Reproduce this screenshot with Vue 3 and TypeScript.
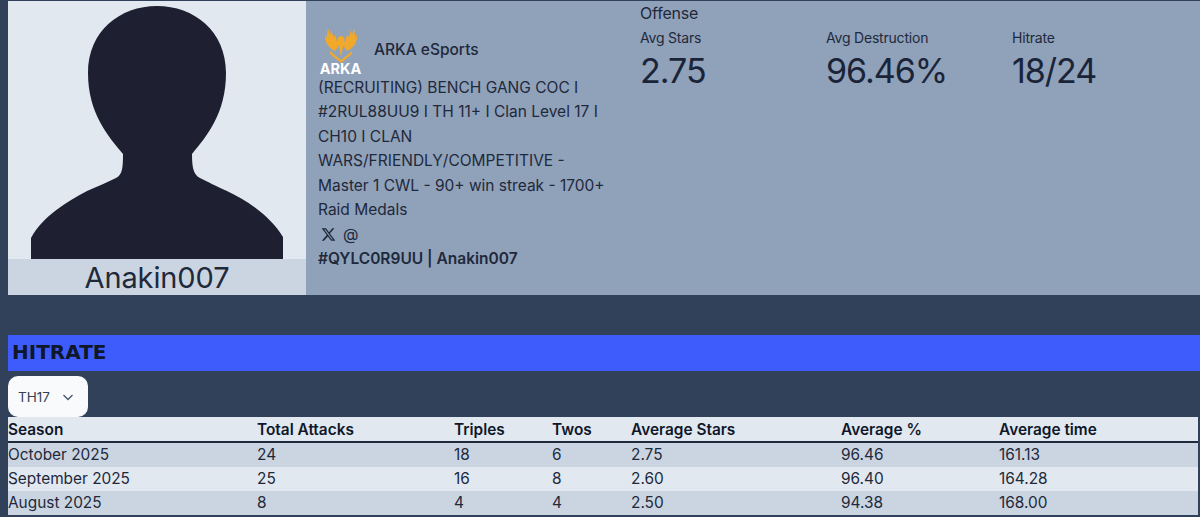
<script setup lang="ts">
interface Stat { label: string; value: string }
interface Row { season: string; total: number; triples: number; twos: number; stars: string; pct: string; time: string }
const stats: Stat[] = [
  { label: 'Avg Stars', value: '2.75' },
  { label: 'Avg Destruction', value: '96.46%' },
  { label: 'Hitrate', value: '18/24' },
]
const heads = ['Season', 'Total Attacks', 'Triples', 'Twos', 'Average Stars', 'Average %', 'Average time']
const rows: Row[] = [
  { season: 'October 2025', total: 24, triples: 18, twos: 6, stars: '2.75', pct: '96.46', time: '161.13' },
  { season: 'September 2025', total: 25, triples: 16, twos: 8, stars: '2.60', pct: '96.40', time: '164.28' },
  { season: 'August 2025', total: 8, triples: 4, twos: 4, stars: '2.50', pct: '94.38', time: '168.00' },
]
</script>

<template>
  <div class="page">
    <section class="profile">
      <div class="avatar">
        <div class="portrait">
          <svg width="298" height="258" viewBox="0 0 298 258">
            <path fill="#1e2032" d="M23 258 V237 C35 215 60 200 79 190 C90 185 100 181 108 177 C114 174 115 168 115 153 C100 135 80 112 80 72 C80 30 112 5 149 5 C186 5 218 30 218 72 C218 112 199 135 184 153 C184 168 186 174 192 177 C200 181 208 185 219 190 C240 200 262 215 275 236 V258 Z"/>
          </svg>
        </div>
        <div class="name">Anakin007</div>
      </div>
      <div class="info">
        <div class="clan">
          <div class="logo">
            <svg width="40" height="36" viewBox="0 0 40 36">
              <path fill="#f0a92a" d="M7 1 L9 8 L10 3 L12.500 10 L14 8 L16 14 L17 20 L14 24 C9 22 3 16 4 7 L5.500 11 Z"/>
              <path fill="#f0a92a" d="M33 1 L31 8 L30 3 L27.500 10 L26 8 L24 14 L23 20 L26 24 C31 22 37 16 36 7 L34.500 11 Z"/>
              <path fill="#f0a92a" d="M20 9 C23 9 24 12 23 14 L25 16 L22 20 L20 30 L18 20 L15 16 L17 14 C16 12 17 9 20 9 Z"/>
              <path fill="#f0a92a" d="M9 24 L20 33 L31 24 L31 27 L20 36 L9 27 Z"/>
            </svg>
            <span class="logo-text">ARKA</span>
          </div>
          <span class="clan-name">ARKA eSports</span>
        </div>
        <p class="bio">(RECRUITING) BENCH GANG COC I #2RUL88UU9 I TH 11+ I Clan Level 17 I CH10 I CLAN WARS/FRIENDLY/COMPETITIVE - Master 1 CWL - 90+ win streak - 1700+ Raid Medals</p>
        <div class="social">
          <svg width="15" height="15" viewBox="0 0 24 24">
            <path fill="#1e293b" d="M18.200 2h3.400l-7.400 8.500L23 22h-6.800l-5.300-7-6.100 7H1.300l7.900-9.100L1 2h7l4.800 6.400zm-1.200 18h1.900L7 3.900H5z"/>
          </svg>
          <span>@</span>
        </div>
        <div class="tag">#QYLC0R9UU | Anakin007</div>
      </div>
      <div class="offense">
        <div class="offense-title">Offense</div>
        <div class="stats">
          <div v-for="s in stats" :key="s.label">
            <div class="stat-label">{{ s.label }}</div>
            <div class="stat-value">{{ s.value }}</div>
          </div>
        </div>
      </div>
    </section>

    <h2 class="banner">HITRATE</h2>

    <div class="select">
      <span>TH17</span>
      <svg width="12" height="12" viewBox="0 0 12 12">
        <path d="M1.500 4 L6 8.500 L10.500 4" fill="none" stroke="#475569" stroke-width="1.300"/>
      </svg>
    </div>

    <table class="table">
      <thead>
        <tr><th v-for="h in heads" :key="h">{{ h }}</th></tr>
      </thead>
      <tbody>
        <tr v-for="r in rows" :key="r.season">
          <td>{{ r.season }}</td>
          <td>{{ r.total }}</td>
          <td>{{ r.triples }}</td>
          <td>{{ r.twos }}</td>
          <td>{{ r.stars }}</td>
          <td>{{ r.pct }}</td>
          <td>{{ r.time }}</td>
        </tr>
      </tbody>
    </table>
  </div>
</template>

<style>
html, body { margin: 0; background: #32415a; }
</style>

<style scoped>
.page {
  height: 517px;
  box-sizing: border-box;
  padding: 1px 0 0 8px;
  background: #32415a;
  color: #1e293b;
  font-family: Inter, "Noto Sans", sans-serif;
  overflow: hidden;
}
.profile {
  display: flex;
  height: 294px;
  background: #90a1ba;
}
.avatar {
  width: 298px;
  flex: none;
  display: flex;
  flex-direction: column;
  background: #e2e8f0;
}
.portrait { height: 258px; }
.portrait svg { display: block; }
.name {
  height: 36px;
  background: #cbd5e1;
  text-align: center;
  font-size: 29px;
  line-height: 38px;
  letter-spacing: -0.1px;
}
.info {
  width: 300px;
  flex: none;
  padding: 26px 0 0 12px;
  font-size: 15.500px;
}
.clan { display: flex; align-items: center; gap: 11px; height: 49px; }
.logo {
  width: 45px;
  display: flex;
  flex-direction: column;
  align-items: center;
}
.logo svg { display: block; }
.logo-text {
  color: #fff;
  font-weight: 700;
  font-size: 14.500px;
  line-height: 14px;
  margin-top: -1px;
}
.clan-name { font-weight: 500; font-size: 15.500px; margin-bottom: 4px; }
.bio {
  margin: 0;
  line-height: 24.400px;
  width: 292px;
}
.social {
  display: flex;
  align-items: center;
  gap: 7px;
  height: 24px;
  padding-left: 3px;
  font-size: 16px;
}
.tag {
  font-weight: 600;
  line-height: 26px;
}
.offense { padding-left: 22px; flex: 1; }
.offense-title { font-size: 16px; line-height: 24px; letter-spacing: -0.2px; }
.stats {
  display: grid;
  grid-template-columns: 186px 186px 186px;
  margin-top: 1px;
}
.stat-label { font-size: 14px; line-height: 24px; letter-spacing: -0.2px; }
.stat-value { font-size: 34px; line-height: 41px; letter-spacing: -1px; color: #1a2438; }
.banner {
  margin: 40px 0 0;
  height: 36px;
  padding-left: 4px;
  background: #3e5cfb;
  color: #0f172a;
  font-family: "DejaVu Sans", sans-serif;
  font-size: 20px;
  font-weight: 700;
  line-height: 34px;
}
.select {
  margin-top: 5px;
  width: 80px;
  height: 41px;
  box-sizing: border-box;
  display: flex;
  align-items: center;
  gap: 12px;
  padding-left: 10px;
  background: #f8fafc;
  border-radius: 10px;
  font-size: 13.500px;
  color: #334155;
}
.table {
  width: 1190px;
  table-layout: fixed;
  border-collapse: collapse;
  font-size: 15.400px;
  color: #1e293b;
}
.table th:nth-child(1) { width: 249px; }
.table th:nth-child(2) { width: 197px; }
.table th:nth-child(3) { width: 98px; }
.table th:nth-child(4) { width: 79px; }
.table th:nth-child(5) { width: 210px; }
.table th:nth-child(6) { width: 158px; }
.table th {
  height: 24px;
  padding: 0;
  text-align: left;
  font-weight: 600;
  background: #e2e8f0;
  border-bottom: 2px solid #1e293b;
  color: #0f172a;
}
.table td {
  height: 24px;
  padding: 0;
  line-height: 24px;
}
.table tbody tr:nth-child(odd) td { background: #cbd5e1; }
.table tbody tr:nth-child(even) td { background: #e2e8f0; }
</style>
